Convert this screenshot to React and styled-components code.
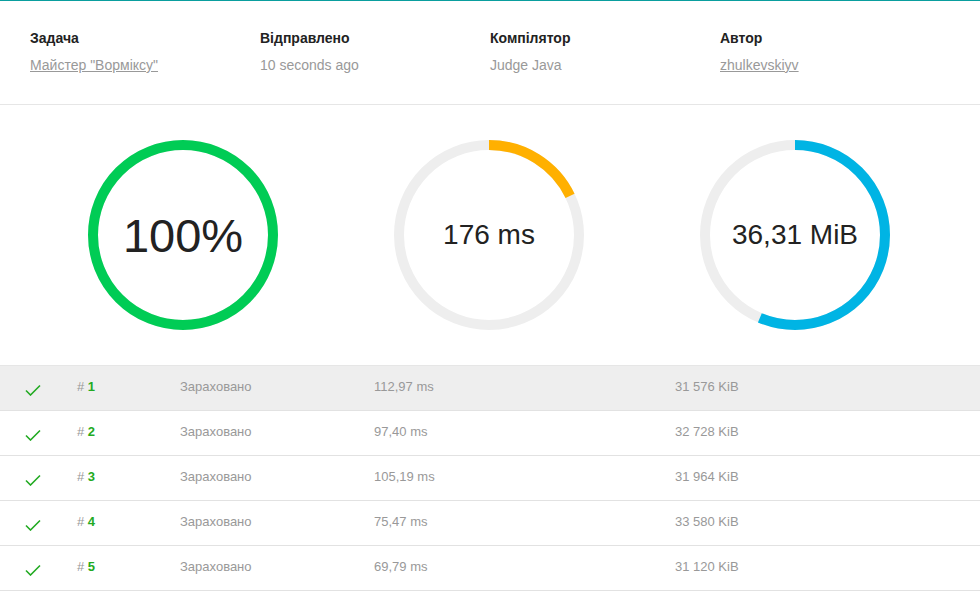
import React from "react";
import styled, { createGlobalStyle } from "styled-components";

const GlobalStyle = createGlobalStyle`
	body {
		margin: 0;
		background: #fff;
		font-family: "Liberation Sans", Arial, sans-serif;
	}
`;

const info = [
	{ label: "Задача", value: "Майстер \"Ворміксу\"", link: true },
	{ label: "Відправлено", value: "10 seconds ago" },
	{ label: "Компілятор", value: "Judge Java" },
	{ label: "Автор", value: "zhulkevskiyv", link: true },
];

const gauges = [
	{ text: "100%", fraction: 1, color: "#00cc55", big: true },
	{ text: "176 ms", fraction: 0.178, color: "#ffb000" },
	{ text: "36,31 MiB", fraction: 0.563, color: "#00b4e4" },
];

const tests = [
	{ n: 1, time: "112,97 ms", mem: "31 576 KiB" },
	{ n: 2, time: "97,40 ms", mem: "32 728 KiB" },
	{ n: 3, time: "105,19 ms", mem: "31 964 KiB" },
	{ n: 4, time: "75,47 ms", mem: "33 580 KiB" },
	{ n: 5, time: "69,79 ms", mem: "31 120 KiB" },
];

const Gauge = ({ text, fraction, color, big }) => {
	const r = 90;
	const len = 2 * Math.PI * r;
	return (
		<GaugeBox>
			<svg width="190" height="190" viewBox="0 0 190 190">
				<circle cx="95" cy="95" r={r} fill="none" stroke="#eeeeee" strokeWidth="10" />
				<circle
					cx="95"
					cy="95"
					r={r}
					fill="none"
					stroke={color}
					strokeWidth="10"
					strokeDasharray={`${len * fraction} ${len}`}
					transform="rotate(-90 95 95)"
				/>
			</svg>
			<GaugeText $big={big}>{text}</GaugeText>
		</GaugeBox>
	);
};

const Check = () => (
	<svg width="16" height="12" viewBox="0 0 16 12">
		<path d="M1 6.5 L5.5 11 L15 1.5" fill="none" stroke="#22aa22" strokeWidth="1.6" />
	</svg>
);

const App = () => {
	return (
		<>
			<GlobalStyle />
			<Card>
				<InfoBar>
					{info.map((item) => (
						<InfoItem key={item.label}>
							<InfoLabel>{item.label}</InfoLabel>
							<InfoValue $link={item.link}>{item.value}</InfoValue>
						</InfoItem>
					))}
				</InfoBar>
				<Gauges>
					{gauges.map((g) => (
						<Gauge key={g.text} {...g} />
					))}
				</Gauges>
				<Tests>
					{tests.map((t) => (
						<TestRow key={t.n} $active={t.n === 1}>
							<CheckCell>
								<Check />
							</CheckCell>
							<NumCell>
								# <b>{t.n}</b>
							</NumCell>
							<StatusCell>Зараховано</StatusCell>
							<TimeCell>{t.time}</TimeCell>
							<MemCell>{t.mem}</MemCell>
						</TestRow>
					))}
				</Tests>
			</Card>
		</>
	);
};

const Card = styled.div`
	width: 980px;
	border-top: 1px solid #0a9e9e;
	background: #fff;
`;

const InfoBar = styled.section`
	display: grid;
	grid-template-columns: repeat(4, 230px);
	padding: 29px 30px 0;
	height: 104px;
	box-sizing: border-box;
	border-bottom: 1px solid #e6e6e6;
`;

const InfoItem = styled.div`
	display: flex;
	flex-direction: column;
	gap: 11px;
`;

const InfoLabel = styled.span`
	font-size: 14px;
	font-weight: bold;
	color: #222;
`;

const InfoValue = styled.span`
	font-size: 14px;
	color: #999;
	text-decoration: ${(p) => (p.$link ? "underline" : "none")};
`;

const Gauges = styled.section`
	display: flex;
	padding: 35px 0 35px 88px;
	gap: 116px;
	border-bottom: 1px solid #e6e6e6;
`;

const GaugeBox = styled.div`
	position: relative;
	width: 190px;
	height: 190px;

	svg {
		display: block;
	}
`;

const GaugeText = styled.div`
	position: absolute;
	inset: 0;
	display: flex;
	align-items: center;
	justify-content: center;
	font-size: ${(p) => (p.$big ? "47px" : "28px")};
	color: #222;
`;

const Tests = styled.section`
	display: flex;
	flex-direction: column;
`;

const TestRow = styled.div`
	display: flex;
	align-items: center;
	height: 45px;
	box-sizing: border-box;
	padding-bottom: 3px;
	border-bottom: 1px solid #e2e2e2;
	background: ${(p) => (p.$active ? "#eeeeee" : "#fff")};
	font-size: 13px;
	color: #999;
`;

const CheckCell = styled.div`
	width: 77px;
	padding-left: 25px;
	box-sizing: border-box;
	display: flex;
	padding-top: 7px;
`;

const NumCell = styled.div`
	width: 103px;
	color: #999;

	b {
		color: #22aa22;
	}
`;

const StatusCell = styled.div`
	width: 194px;
`;

const TimeCell = styled.div`
	width: 301px;
`;

const MemCell = styled.div`
	flex: 1;
`;

export default App;
